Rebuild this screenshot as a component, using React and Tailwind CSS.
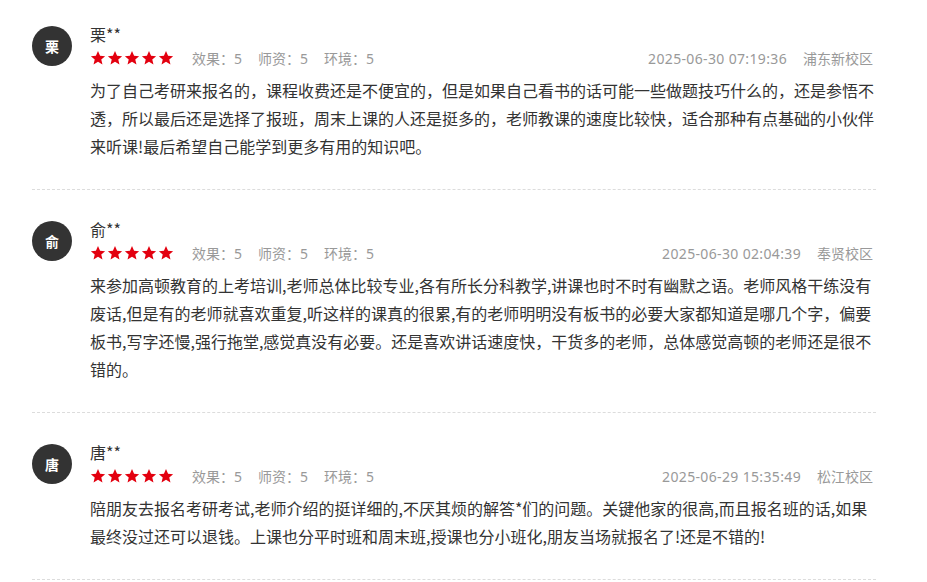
import React from "react";

const reviews = [
  {
    name: "栗**",
    avatar: "栗",
    date: "2025-06-30 07:19:36",
    campus: "浦东新校区",
    text: "为了自己考研来报名的，课程收费还是不便宜的，但是如果自己看书的话可能一些做题技巧什么的，还是参悟不透，所以最后还是选择了报班，周末上课的人还是挺多的，老师教课的速度比较快，适合那种有点基础的小伙伴来听课!最后希望自己能学到更多有用的知识吧。",
  },
  {
    name: "俞**",
    avatar: "俞",
    date: "2025-06-30 02:04:39",
    campus: "奉贤校区",
    text: "来参加高顿教育的上考培训,老师总体比较专业,各有所长分科教学,讲课也时不时有幽默之语。老师风格干练没有废话,但是有的老师就喜欢重复,听这样的课真的很累,有的老师明明没有板书的必要大家都知道是哪几个字，偏要板书,写字还慢,强行拖堂,感觉真没有必要。还是喜欢讲话速度快，干货多的老师，总体感觉高顿的老师还是很不错的。",
  },
  {
    name: "唐**",
    avatar: "唐",
    date: "2025-06-29 15:35:49",
    campus: "松江校区",
    text: "陪朋友去报名考研考试,老师介绍的挺详细的,不厌其烦的解答*们的问题。关键他家的很高,而且报名班的话,如果最终没过还可以退钱。上课也分平时班和周末班,授课也分小班化,朋友当场就报名了!还是不错的!",
  },
];

function Star() {
  return (
    <svg viewBox="0 0 24 24" className="w-4 h-4" fill="#e3000f">
      <path d="M12 1.5l3.1 7.1 7.6.7-5.8 5 1.8 7.5L12 17.8l-6.7 4 1.8-7.5-5.8-5 7.6-.7z" />
    </svg>
  );
}

function ReviewItem({ r }) {
  return (
    <div className="flex pt-[27px] first:pt-[22px] pb-[29px] border-b border-dashed border-[#dcdcdc]">
      <div className="mt-[4px] w-10 h-10 shrink-0 rounded-full bg-[#333] text-white flex items-center justify-center text-[14px] font-bold">
        {r.avatar}
      </div>
      <div className="ml-[18px] flex-1 min-w-0">
        <div className="text-[16px] leading-[24px] text-[#333]">{r.name}</div>
        <div
          className="flex items-center h-[24px] text-[14px] text-[#999]"
          style={{ fontFamily: '"Noto Sans", "Noto Sans CJK SC", sans-serif' }}
        >
          <div className="flex gap-[1px]">
            {[0, 1, 2, 3, 4].map((i) => (
              <Star key={i} />
            ))}
          </div>
          <span className="ml-[18px]">效果：5</span>
          <span className="ml-[16px]">师资：5</span>
          <span className="ml-[16px]">环境：5</span>
          <span className="ml-auto tracking-[0.35px]">{r.date}</span>
          <span className="ml-[16px] mr-[3px]">{r.campus}</span>
        </div>
        <p className="mt-[6px] text-[16px] leading-[28px] text-[#333]">{r.text}</p>
      </div>
    </div>
  );
}

export default function App() {
  return (
    <div
      className="min-h-screen bg-white px-8 w-[908px]"
      style={{ fontFamily: '"Microsoft YaHei", "Noto Sans CJK SC", sans-serif' }}
    >
      {reviews.map((r) => (
        <ReviewItem key={r.name} r={r} />
      ))}
    </div>
  );
}
